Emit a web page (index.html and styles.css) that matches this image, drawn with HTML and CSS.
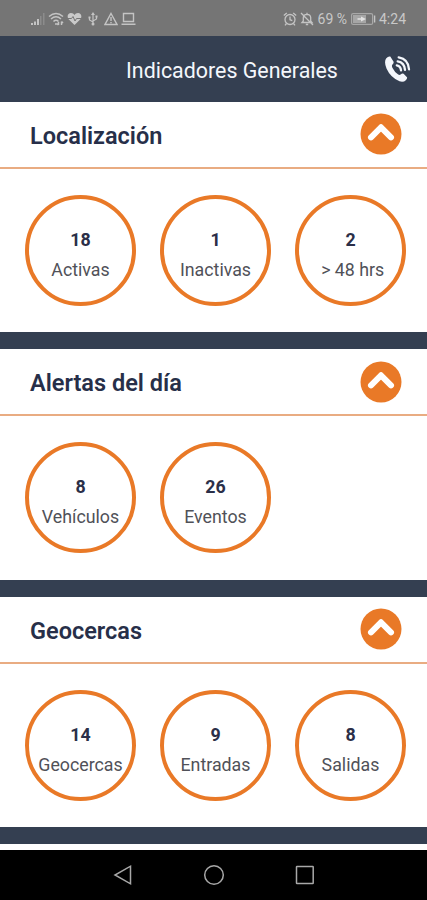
FILE: index.html
```html
<!DOCTYPE html>
<html lang="es">
<head>
    <meta charset="UTF-8">
    <meta name="viewport" content="width=device-width, initial-scale=1.0">
    <title>Indicadores Generales</title>
    <link rel="stylesheet" href="styles.css">
</head>
<body>
    <!-- icono compartido por las tres secciones -->
    <svg class="defs" width="0" height="0">
        <symbol id="chevron" viewBox="0 0 42 42">
            <circle cx="21" cy="21" r="20.5" fill="#e97927"/>
            <path d="M11 24.300 21 14.300 31 24.300" fill="none" stroke="#fff" stroke-width="6" stroke-linecap="round" stroke-linejoin="round"/>
        </symbol>
    </svg>

    <div class="status-bar">
        <div class="status-left">
            <svg width="15" height="14" viewBox="0 0 15 14" fill="#c4c4c4">
                <path d="M1 11h2v2H1zM4 9.500h2V13H4zM7 7h2v6H7z"/>
                <path d="M10 4h1.500v9H10zM13 1h1.500v12H13z" fill="#8c8c8c"/>
            </svg>
            <svg width="16" height="14" viewBox="0 0 16 14" fill="none" stroke="#c4c4c4" stroke-width="1.500">
                <path d="M1 4.500Q8-1.500 15 4.500M3 7Q8 2.500 13 7M5.500 9.500Q8 7 10.500 9.500"/>
                <path d="M7 12h2M10.500 13V10M10.500 13l-1.500-1.500M13.500 9.500V13M13.500 9.500 15 11"/>
            </svg>
            <svg width="15" height="14" viewBox="0 0 15 14">
                <path d="M7.500 13 1.800 7.400C-.6 4.500 1 1 4 1c1.600 0 2.800.8 3.500 2C8.200 1.800 9.400 1 11 1c3 0 4.600 3.500 2.200 6.400z" fill="#c9c9c9"/>
                <path d="M1 6.500h3.500L6 4.500 8 9l1.500-2.500H14" fill="none" stroke="#757575"/>
            </svg>
            <svg class="usb" width="12" height="14" viewBox="0 0 12 14" fill="none" stroke="#c4c4c4" stroke-width="1.200">
                <path d="M6 12V2M6 10 2.500 8V5.500M6 9l3.500-2V4.500"/>
                <path d="M6 0 8 3H4zM1.500 4.500h2v2h-2zM8.500 3.500h2v2h-2z" fill="#c4c4c4" stroke="none"/>
                <circle cx="6" cy="12" r="1.500" fill="#c4c4c4" stroke="none"/>
            </svg>
            <svg width="14" height="14" viewBox="0 0 14 14" fill="none" stroke="#c4c4c4" stroke-width="1.400">
                <path d="M7 1.500 13 12.500H1zM7 5v4M7 10v1.300"/>
            </svg>
            <svg width="15" height="14" viewBox="0 0 15 14" fill="none" stroke="#c4c4c4" stroke-width="1.400">
                <path d="M2.500 9.500v-8h10v8zM.5 12.300h14"/>
            </svg>
        </div>
        <div class="status-right">
            <svg width="14" height="14" viewBox="0 0 14 14" fill="none" stroke="#c4c4c4" stroke-width="1.300">
                <circle cx="7" cy="7.500" r="5"/>
                <path d="M7 4.500v3.200l2.300 1M.8 3.500l3-2.500M13.200 3.500l-3-2.500M3.500 11.500 2 13.300M10.500 11.500l1.500 1.800"/>
            </svg>
            <svg width="14" height="14" viewBox="0 0 14 14" fill="none" stroke="#c4c4c4" stroke-width="1.300">
                <path d="M2 10.500h10L10.700 9V5.500Q10.500 2.500 7 2.300 3.500 2.500 3.300 5.500V9zM7 .7v1.500M5.800 12.500h2.400M1 1l12 12"/>
            </svg>
            <span>69 %</span>
            <svg width="25" height="12" viewBox="0 0 25 12">
                <rect x=".6" y=".6" width="21" height="10.800" rx="1.500" fill="none" stroke="#a8a8a8" stroke-width="1.200"/>
                <path d="M2 2h13v8H2z" fill="#a6a6a6"/>
                <path d="M6.500 5.300H10V3.500L15 6l-5 2.500V6.700H6.500z" fill="#e2e2e2"/>
                <path d="M23.600 2.500v7" stroke="#c4c4c4" stroke-width="1.400"/>
            </svg>
            <span>4:24</span>
        </div>
    </div>

    <header class="app-header">
        <h1>Indicadores Generales</h1>
        <svg class="phone" width="27" height="28" viewBox="0 0 27 28">
            <path d="M2.300 3.200Q4.500.8 6.300 1.600L9.600 6.800Q10 8 8.300 9.700 7.500 10.800 8.400 12.700 10.600 17.200 14.200 19.500 15.600 20.300 16.600 19.500 18.300 18 19.600 18.700L23 22.200Q23.500 23.500 21.800 25.200 19.500 27.500 15.500 26.300 6.500 22.500 2.500 13.500-.3 6.500 2.300 3.200Z" fill="#f4f7fc"/>
            <path d="M12.800 10.300Q16.700 11 17 15.300M13.700 6.300Q20.500 7.500 21 14.800M14.700 2.300Q24.500 4 25 14.300" fill="none" stroke="#f4f7fc" stroke-width="2.300" stroke-linecap="round"/>
        </svg>
    </header>

    <main class="sections">
        <section class="panel">
            <div class="panel-head">
                <h2>Localización</h2>
                <svg class="toggle"><use href="#chevron"/></svg>
            </div>
            <div class="indicators">
                <div class="indicator"><strong>18</strong><span>Activas</span></div>
                <div class="indicator"><strong>1</strong><span>Inactivas</span></div>
                <div class="indicator"><strong>2</strong><span>&nbsp;&gt; 48 hrs</span></div>
            </div>
        </section>

        <section class="panel">
            <div class="panel-head">
                <h2>Alertas del día</h2>
                <svg class="toggle"><use href="#chevron"/></svg>
            </div>
            <div class="indicators">
                <div class="indicator"><strong>8</strong><span>Vehículos</span></div>
                <div class="indicator"><strong>26</strong><span>Eventos</span></div>
            </div>
        </section>

        <section class="panel">
            <div class="panel-head">
                <h2>Geocercas</h2>
                <svg class="toggle"><use href="#chevron"/></svg>
            </div>
            <div class="indicators">
                <div class="indicator"><strong>14</strong><span>Geocercas</span></div>
                <div class="indicator"><strong>9</strong><span>Entradas</span></div>
                <div class="indicator"><strong>8</strong><span>Salidas</span></div>
            </div>
        </section>
    </main>

    <nav class="nav-bar">
        <svg width="22" height="22" viewBox="0 0 22 22"><path d="M18.500 2.200v17.600L3 11z"/></svg>
        <svg width="22" height="22" viewBox="0 0 22 22"><circle cx="11" cy="11" r="9.300"/></svg>
        <svg width="22" height="22" viewBox="0 0 22 22"><rect x="2.500" y="2.500" width="16.700" height="17" rx=".5"/></svg>
    </nav>
</body>
</html>
```
FILE: styles.css
```css
* {
    box-sizing: border-box;
}
body {
    margin: 0;
    height: 900px;
    display: flex;
    flex-direction: column;
    overflow: hidden;
    font-family: Roboto, "Liberation Sans", sans-serif;
    background: #fff;
}
h1, h2 {
    margin: 0;
}
svg {
    display: block;
    flex: none;
}
.defs {
    position: absolute;
}
.status-bar {
    height: 36px;
    flex: none;
    display: flex;
    justify-content: space-between;
    align-items: center;
    padding: 1px 21px 0 30px;
    background: #757575;
    color: #c8c8c8;
    font-size: 14px;
}
.status-left {
    display: flex;
    gap: 3px;
}
.usb {
    margin: 0 2px;
}
.status-right {
    display: flex;
    align-items: center;
    gap: 3.500px;
}
.app-header {
    height: 65.500px;
    flex: none;
    display: flex;
    justify-content: space-between;
    align-items: center;
    padding: 0 16px 0 126px;
    background: #343f51;
    color: #f4f7fc;
}
.app-header h1 {
    font-size: 21.400px;
    font-weight: 400;
    padding-top: 3px;
}
.sections {
    flex: 1;
}
.panel {
    height: 247.500px;
    border-bottom: 17px solid #343f51;
}
.panel-head {
    height: 67px;
    display: flex;
    justify-content: space-between;
    align-items: center;
    padding: 0 25px 0 30px;
    border-bottom: 2px solid #e9ac82;
}
.panel-head h2 {
    font-size: 23.500px;
    font-weight: 600;
    color: #272f49;
    padding-top: 3px;
}
.toggle {
    width: 42px;
    height: 42px;
}
.indicators {
    display: flex;
    gap: 24px;
    padding: 26px 25px 0;
}
.indicator {
    width: 111px;
    height: 111px;
    flex: none;
    display: flex;
    flex-direction: column;
    align-items: center;
    padding-top: 26px;
    border: 4px solid #e97927;
    border-radius: 50%;
    line-height: 30px;
    color: #505158;
    font-size: 17.800px;
    white-space: nowrap;
}
.indicator strong {
    font-weight: 700;
    color: #2b2f48;
}
.nav-bar {
    height: 50.500px;
    flex: none;
    display: flex;
    justify-content: center;
    align-items: center;
    gap: 69px;
    background: #000;
}
.nav-bar svg {
    fill: none;
    stroke: #a8a8a8;
    stroke-width: 1.500;
}
```
